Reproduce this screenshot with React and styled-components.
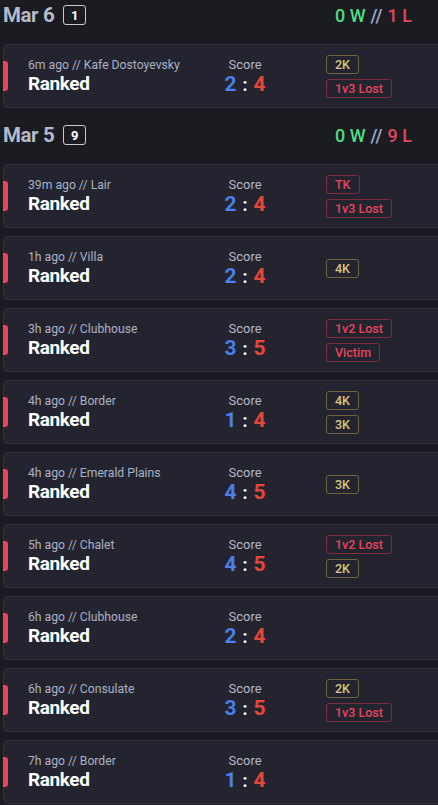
import React from 'react'
import styled, { createGlobalStyle } from 'styled-components'

const GlobalStyle = createGlobalStyle`
  html, body {
    margin: 0;
    padding: 0;
    background: #1b1c22;
    font-family: Roboto, "Liberation Sans", sans-serif;
    overflow: hidden;
  }
`

const days = [
  {
    date: 'Mar 6',
    wins: 0,
    losses: 1,
    matches: [
      { ago: '6m ago', map: 'Kafe Dostoyevsky', blue: 2, red: 4, tags: [['2K', 'gold'], ['1v3 Lost', 'red']] },
    ],
  },
  {
    date: 'Mar 5',
    wins: 0,
    losses: 9,
    matches: [
      { ago: '39m ago', map: 'Lair', blue: 2, red: 4, tags: [['TK', 'red'], ['1v3 Lost', 'red']] },
      { ago: '1h ago', map: 'Villa', blue: 2, red: 4, tags: [['4K', 'gold']] },
      { ago: '3h ago', map: 'Clubhouse', blue: 3, red: 5, tags: [['1v2 Lost', 'red'], ['Victim', 'red']] },
      { ago: '4h ago', map: 'Border', blue: 1, red: 4, tags: [['4K', 'gold'], ['3K', 'gold']] },
      { ago: '4h ago', map: 'Emerald Plains', blue: 4, red: 5, tags: [['3K', 'gold']] },
      { ago: '5h ago', map: 'Chalet', blue: 4, red: 5, tags: [['1v2 Lost', 'red'], ['2K', 'gold']] },
      { ago: '6h ago', map: 'Clubhouse', blue: 2, red: 4, tags: [] },
      { ago: '6h ago', map: 'Consulate', blue: 3, red: 5, tags: [['2K', 'gold'], ['1v3 Lost', 'red']] },
      { ago: '7h ago', map: 'Border', blue: 1, red: 4, tags: [] },
    ],
  },
]

function Match({ ago, map, blue, red, tags }) {
  return (
    <Card>
      <LossBar />
      <Info>
        <Meta>{ago} // {map}</Meta>
        <Mode>Ranked</Mode>
      </Info>
      <Score>
        <ScoreLabel>Score</ScoreLabel>
        <ScoreLine>
          <Num color="#4a7ee8">{blue}</Num>
          <Colon>:</Colon>
          <Num color="#e5483a">{red}</Num>
        </ScoreLine>
      </Score>
      <Tags>
        {tags.map(([text, kind], i) => (
          <Tag key={i} kind={kind}>{text}</Tag>
        ))}
      </Tags>
    </Card>
  )
}

export default function App() {
  return (
    <Page>
      <GlobalStyle />
      {days.map(day => (
        <Section key={day.date}>
          <DayHeader>
            <DayTitle>
              {day.date}
              <CountBadge>{day.matches.length}</CountBadge>
            </DayTitle>
            <Record>
              <Win>{day.wins} W</Win>
              <Sep>//</Sep>
              <Loss>{day.losses} L</Loss>
            </Record>
          </DayHeader>
          <List>
            {day.matches.map((m, i) => (
              <Match key={i} {...m} />
            ))}
          </List>
        </Section>
      ))}
    </Page>
  )
}

const Page = styled.div`
  width: 438px;
  padding-left: 3px;
  box-sizing: border-box;
  display: flex;
  flex-direction: column;
  gap: 12px;
`

const Section = styled.section`
  display: flex;
  flex-direction: column;
`

const DayHeader = styled.div`
  height: 30px;
  display: flex;
  align-items: center;
  justify-content: space-between;
  padding-right: 26px;
  margin-bottom: 14px;
`

const DayTitle = styled.h2`
  margin: 0;
  display: flex;
  align-items: center;
  gap: 9px;
  font-size: 20.5px;
  font-weight: 700;
  color: #b3bbca;
  letter-spacing: -0.4px;
`

const CountBadge = styled.span`
  display: inline-flex;
  align-items: center;
  justify-content: center;
  min-width: 21px;
  height: 18px;
  border: 1px solid #c8ccd4;
  border-radius: 3px;
  color: #ffffff;
  font-size: 13px;
  font-weight: 700;
  letter-spacing: 0;
`

const Record = styled.div`
  display: flex;
  gap: 5px;
  font-size: 18px;
  font-weight: 500;
`

const Win = styled.span`
  color: #4fdc80;
`

const Sep = styled.span`
  color: #9fb0cc;
`

const Loss = styled.span`
  color: #e5445a;
`

const List = styled.div`
  display: flex;
  flex-direction: column;
  gap: 8px;
`

const Card = styled.div`
  position: relative;
  height: 64px;
  box-sizing: border-box;
  background: #232430;
  border: 1px solid #31333e;
  border-right: none;
  border-radius: 6px 0 0 6px;
  display: grid;
  grid-template-columns: 174px 86px auto;
  align-items: center;
  padding-left: 24px;
`

const LossBar = styled.span`
  position: absolute;
  left: -1px;
  top: 50%;
  width: 5px;
  height: 30px;
  transform: translateY(-50%);
  background: #e5455a;
  border-radius: 0 3px 3px 0;
`

const Info = styled.div`
  display: flex;
  flex-direction: column;
`

const Meta = styled.span`
  font-size: 12.2px;
  color: #aab2c3;
  line-height: 15px;
`

const Mode = styled.span`
  font-size: 19px;
  font-weight: 700;
  color: #ffffff;
  letter-spacing: -0.4px;
  line-height: 21px;
`

const Score = styled.div`
  display: flex;
  flex-direction: column;
  align-items: center;
`

const ScoreLabel = styled.span`
  font-size: 13px;
  color: #b0b8c8;
  line-height: 16px;
`

const ScoreLine = styled.div`
  display: flex;
  align-items: baseline;
  gap: 6px;
  font-size: 21px;
  font-weight: 700;
  line-height: 22px;
`

const Num = styled.span`
  color: ${p => p.color};
`

const Colon = styled.span`
  color: #ffffff;
  font-size: 18px;
`

const Tags = styled.div`
  display: flex;
  flex-direction: column;
  align-items: flex-start;
  gap: 5px;
  margin-left: 38px;
`

const Tag = styled.span`
  height: 19px;
  box-sizing: border-box;
  display: inline-flex;
  align-items: center;
  padding: 0 8px;
  border-radius: 3px;
  font-size: 12.5px;
  font-weight: 500;
  border: 1px solid ${p => (p.kind === 'gold' ? '#6f6542' : '#7c2e3c')};
  color: ${p => (p.kind === 'gold' ? '#dcc57d' : '#e5455a')};
`
